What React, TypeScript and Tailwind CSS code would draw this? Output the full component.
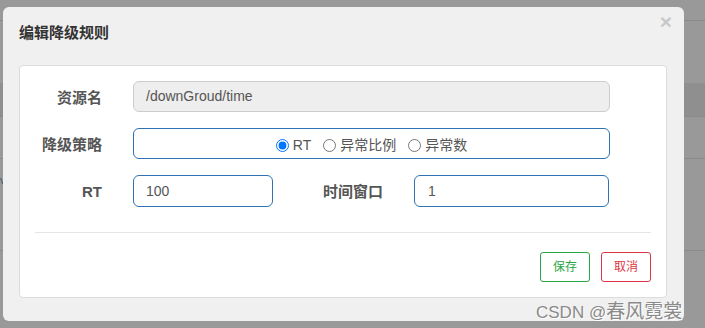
import React from "react";

const font = { fontFamily: '"Liberation Sans", Arial, "Noto Sans CJK SC", sans-serif' };

const App = () => {
    const [mode, setMode] = React.useState("rt");
    return (
        <div className="relative w-[705px] h-[328px] overflow-hidden bg-[#999999]" style={font}>
            {/* table behind the backdrop */}
            <div className="flex flex-col">
                <div className="h-[21px] border-b border-[#8a8a8a]"></div>
                <div className="h-[62px]"></div>
                <div className="h-[34px] bg-[#8f8f8f] border-b border-[#8a8a8a]"></div>
                <div className="h-[42px] border-b border-[#8a8a8a]"></div>
                <div className="h-[92px] border-b border-[#8a8a8a] pt-[8px]">
                    <span className="text-[11px] text-[#3b5b6b]">v</span>
                </div>
            </div>

            {/* modal */}
            <div className="absolute left-[3px] top-[7px] w-[681px] h-[314px] rounded-[6px] bg-[#f0f0f0] flex flex-col">
                <div className="flex items-start justify-between pl-[16px] pr-[12px]">
                    <h3 className="mt-[17px] text-[15px] font-bold text-[#333] leading-[18px]">编辑降级规则</h3>
                    <button className="mt-[4px] text-[21px] font-bold leading-[22px] text-[#c8c8c8]">×</button>
                </div>

                <div className="mt-[23px] mx-[16px] w-[648px] h-[233px] bg-white border border-[#dcdcdc] rounded-[4px] flex flex-col">
                    <div className="pt-[15px] flex flex-col gap-[16px]">
                        <div className="flex items-center h-[31px]">
                            <label className="w-[82px] pt-[3px] text-right text-[15px] font-bold text-[#555]">资源名</label>
                            <div className="ml-[31px] w-[477px] h-[31px] rounded-[6px] border border-[#cccccc] bg-[#eeeeee] flex items-center px-[12px] text-[14px] text-[#555]">
                                /downGroud/time
                            </div>
                        </div>
                        <div className="flex items-center h-[31px]">
                            <label className="w-[82px] pt-[3px] text-right text-[15px] font-bold text-[#555]">降级策略</label>
                            <div className="ml-[31px] w-[477px] h-[31px] pt-[4px] rounded-[6px] border border-[#2f72b3] flex items-center justify-center gap-[12px] text-[14px] text-[#555]">
                                {[
                                    ["rt", "RT"],
                                    ["ratio", "异常比例"],
                                    ["count", "异常数"],
                                ].map(([k, t]) => (
                                    <label key={k} className="flex items-center gap-[4px]">
                                        <input
                                            type="radio"
                                            name="grade"
                                            checked={mode === k}
                                            onChange={() => setMode(k)}
                                            className="w-[13px] h-[13px] m-0"
                                        />
                                        <span>{t}</span>
                                    </label>
                                ))}
                            </div>
                        </div>
                        <div className="flex items-center h-[32px]">
                            <label className="w-[82px] pt-[2px] text-right text-[15px] font-bold text-[#555]">RT</label>
                            <div className="ml-[31px] w-[140px] h-[32px] rounded-[6px] border border-[#2f72b3] flex items-center px-[12px] text-[14px] text-[#555]">
                                100
                            </div>
                            <label className="ml-[50px] pt-[2px] text-[15px] font-bold text-[#555]">时间窗口</label>
                            <div className="ml-[31px] w-[195px] h-[32px] rounded-[6px] border border-[#2f72b3] flex items-center px-[13px] text-[14px] text-[#555]">
                                1
                            </div>
                        </div>
                    </div>

                    <div className="mt-[25px] mx-[15px] border-t border-[#e5e5e5]"></div>

                    <div className="mt-[19px] pr-[15px] flex justify-end gap-[11px]">
                        <button className="w-[50px] h-[30px] rounded-[3px] border border-[#28a745] text-[12px] text-[#28a745] bg-white">保存</button>
                        <button className="w-[50px] h-[30px] rounded-[3px] border border-[#dc3545] text-[12px] text-[#dc3545] bg-white">取消</button>
                    </div>
                </div>
            </div>

            {/* watermark */}
            <div className="absolute left-[536px] top-[298px] text-[17px] text-[#8a8a8a] [text-shadow:1px_1px_0_#ffffff]">
                CSDN @<span className="text-[19px]">春风霓裳</span>
            </div>
        </div>
    );
};

export default App;
